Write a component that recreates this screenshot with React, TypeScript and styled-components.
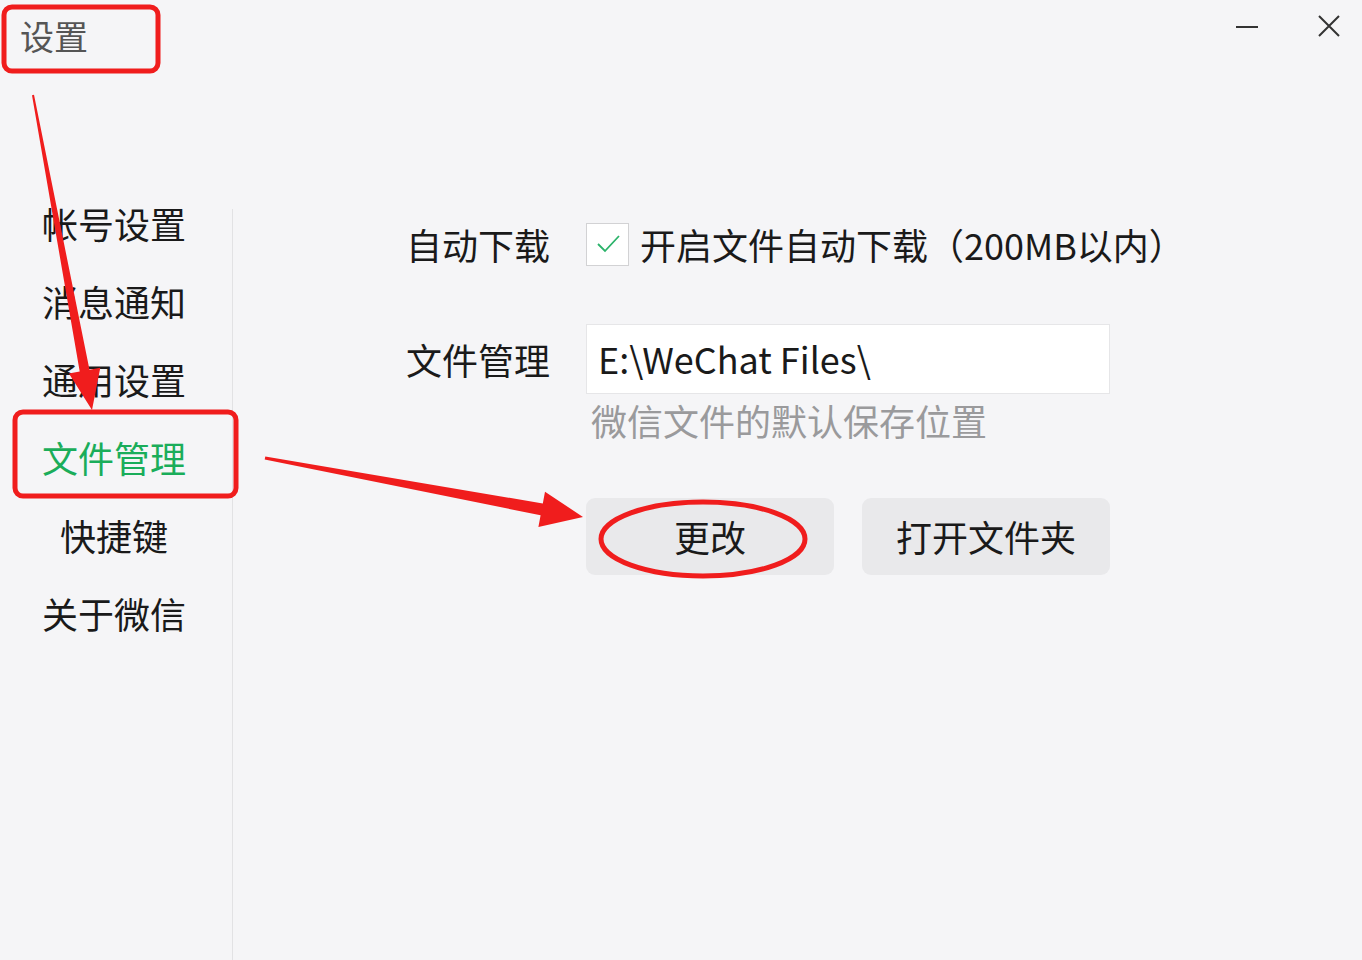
import React from 'react'
import styled, { createGlobalStyle } from 'styled-components'

const GlobalStyle = createGlobalStyle`
  html, body {
    margin : 0;
    padding : 0;
    background : #f5f5f7;
  }
  body {
    font-family : "Noto Sans CJK SC", "Noto Sans", sans-serif;
    color : #1a1a1a;
  }
`;

const Window = styled.div`
  position : relative;
  width : 1362px;
  height : 960px;
  display : flex;
  flex-direction : column;
  background : #f5f5f7;
  overflow : hidden;
`;

const TitleBar = styled.div`
  height : 184px;
  display : flex;
  justify-content : space-between;
  align-items : flex-start;
  padding : 12px 0 0 20px;
  box-sizing : border-box;
`;

const Title = styled.div`
  font-size : 34px;
  line-height : 48px;
  color : #555;
`;

const Controls = styled.div`
  display : flex;
  gap : 58px;
  padding : 2px 21px 0 0;
`;

const CtrlBtn = styled.button`
  width : 24px;
  height : 24px;
  padding : 0;
  border : none;
  background : none;
  display : flex;
  align-items : center;
  justify-content : center;
`;

const Body = styled.div`
  flex : 1;
  display : flex;
`;

const Sidebar = styled.nav`
  width : 232px;
  border-style : solid;
  border-width : 0 1px 0 0;
  border-image : linear-gradient(to bottom, transparent 26px, #e2e2e4 26px) 1;
  display : flex;
  flex-direction : column;
`;

const NavItem = styled.div<{ $active?: boolean }>`
  height : 78px;
  line-height : 78px;
  text-align : center;
  font-size : 36px;
  padding-right : 4px;
  color : ${p => p.$active ? '#1aad5a' : '#1a1a1a'};
`;

const Content = styled.div`
  flex : 1;
  padding : 38px 0 0 173px;
  display : grid;
  grid-template-columns : 144px 524px;
  column-gap : 36px;
  align-content : start;
`;

const Label = styled.div<{ $h: number }>`
  font-size : 36px;
  height : ${p => p.$h}px;
  line-height : ${p => p.$h}px;
  white-space : nowrap;
`;

const CheckRow = styled.div`
  display : flex;
  align-items : center;
  gap : 11px;
  height : 44px;
  white-space : nowrap;
`;

const CheckBox = styled.div`
  width : 43px;
  height : 43px;
  box-sizing : border-box;
  border : 1.5px solid #d2d2d4;
  background : #fff;
  display : flex;
  align-items : center;
  justify-content : center;
  flex : none;
`;

const CheckText = styled.span`
  font-size : 36px;
  line-height : 44px;
`;

const Spacer = styled.div`
  grid-column : 1 / -1;
  height : 58px;
`;

const Field = styled.div`
  display : flex;
  flex-direction : column;
`;

const Input = styled.div`
  height : 70px;
  box-sizing : border-box;
  background : #fff;
  border : 1px solid #e6e6e8;
  font-size : 36px;
  line-height : 66px;
  padding-left : 11px;
`;

const Hint = styled.div`
  margin-top : 6px;
  font-size : 36px;
  line-height : 40px;
  color : #9a9a9c;
  padding-left : 5px;
`;

const Buttons = styled.div`
  margin-top : 58px;
  display : flex;
  gap : 28px;
`;

const Button = styled.button`
  width : 248px;
  height : 77px;
  border : none;
  border-radius : 9px;
  background : #e9e9eb;
  font-family : inherit;
  font-size : 36px;
  line-height : 77px;
  padding : 0;
  color : #1a1a1a;
`;

const Marks = styled.svg`
  position : absolute;
  left : 0;
  top : 0;
  pointer-events : none;
`;

const nav = ['帐号设置', '消息通知', '通用设置', '文件管理', '快捷键', '关于微信'];
const RED = '#f01d1d';

export default function App() {
  return (
    <>
      <GlobalStyle />
      <Window>
        <TitleBar>
          <Title>设置</Title>
          <Controls>
            <CtrlBtn aria-label="minimize">
              <svg width="24" height="24" viewBox="0 0 24 24">
                <line x1="1" y1="13" x2="23" y2="13" stroke="#333" strokeWidth="2" />
              </svg>
            </CtrlBtn>
            <CtrlBtn aria-label="close">
              <svg width="24" height="24" viewBox="0 0 24 24">
                <path d="M2 2 L22 22 M22 2 L2 22" stroke="#333" strokeWidth="2" />
              </svg>
            </CtrlBtn>
          </Controls>
        </TitleBar>

        <Body>
          <Sidebar>
            {nav.map((n, i) => <NavItem key={i} $active={n === '文件管理'}>{n}</NavItem>)}
          </Sidebar>

          <Content>
            <Label $h={44}>自动下载</Label>
            <CheckRow>
              <CheckBox>
                <svg width="30" height="30" viewBox="0 0 30 30">
                  <path d="M5 15 L12 22 L26 7" fill="none" stroke="#2bb36a" strokeWidth="1.8" />
                </svg>
              </CheckBox>
              <CheckText>开启文件自动下载（200MB以内）</CheckText>
            </CheckRow>

            <Spacer />

            <Label $h={70}>文件管理</Label>
            <Field>
              <Input>E:\WeChat Files\</Input>
              <Hint>微信文件的默认保存位置</Hint>
              <Buttons>
                <Button>更改</Button>
                <Button>打开文件夹</Button>
              </Buttons>
            </Field>
          </Content>
        </Body>

        <Marks width="1362" height="960" viewBox="0 0 1362 960">
          <rect x="4" y="7" width="154" height="64" rx="8" fill="none" stroke={RED} strokeWidth="5" />
          <rect x="15" y="412" width="221" height="84" rx="8" fill="none" stroke={RED} strokeWidth="5" />
          <polygon
            fill={RED}
            points="32,95.2 34,94.8 89.5,369.8 100.3,367.8 92,410 68.9,373.6 79.7,371.6"
          />
          <polygon
            fill={RED}
            points="265.3,456.5 542.8,503.5 545,491.7 583,517 538.4,527.1 540.6,515.3 264.7,459.5"
          />
          <ellipse cx="703" cy="539" rx="102" ry="37" fill="none" stroke={RED} strokeWidth="5" />
        </Marks>
      </Window>
    </>
  )
}
